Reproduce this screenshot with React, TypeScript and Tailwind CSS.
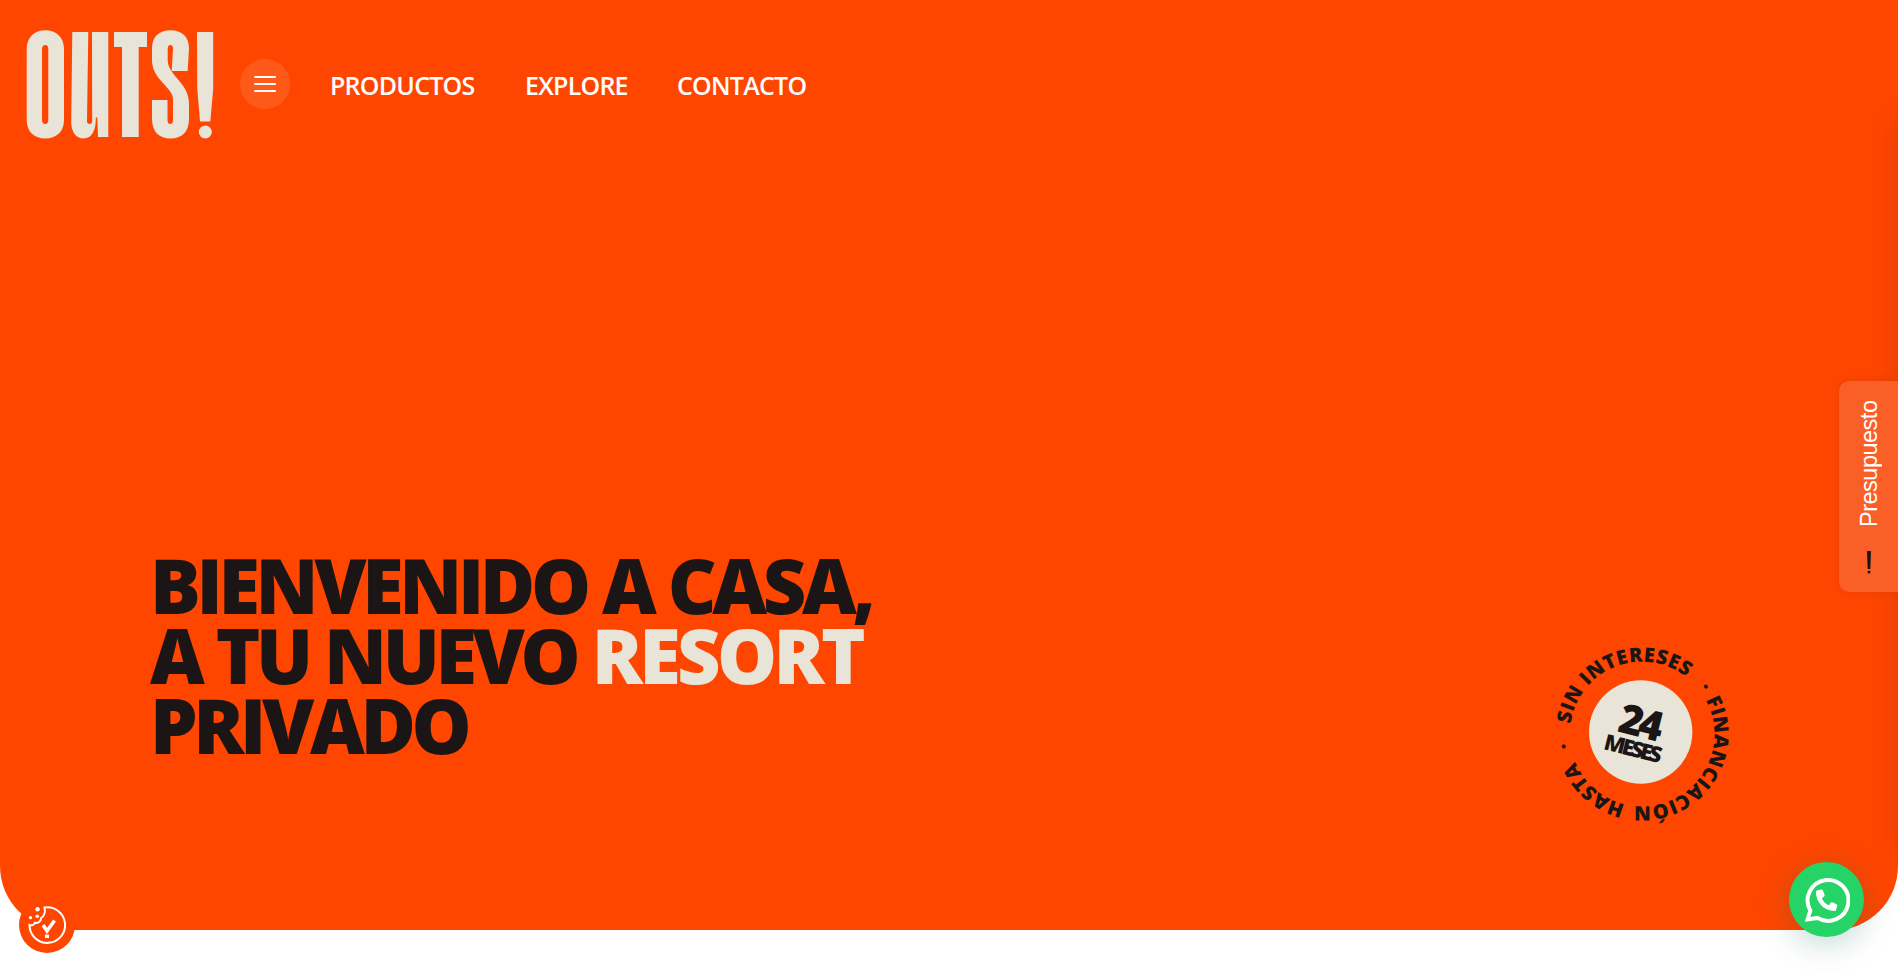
const dark = "#1b1516";

function Logo() {
  return (
    <svg className="h-[110px] w-[188px] shrink-0" viewBox="26 30 188 110" fill="#e8e4d8">
      <path fillRule="evenodd" d="M45.3 30.200C56 30.200 64 37 64 49V120C64 132 56 138.500 45.300 138.500S26.700 132 26.700 120V49C26.700 37 34.500 30.200 45.300 30.200ZM45.300 45C43.300 45 42 46.500 42 49V120C42 122.500 43.300 124 45.300 124S48.300 122.500 48.300 120V49C48.300 46.500 47.300 45 45.300 45Z" />
      <path d="M72.300 32H88.300L87 121C87 123 88 124 89.700 124S92.200 123 92.200 121L92 32H108.300V137H98L97.300 118Q96.500 116.500 95.800 118C96 130 92 138.500 83.500 138.500C76 138.500 71.200 132 71.200 122Z" />
      <path d="M114 32H147V47H138.700V137H122V47H114Z" />
      <path d="M170.500 30.200C182 30.200 189 37 189 48L187.700 71H171.700L173 49C173 46.500 172.300 45 170.500 45S167.700 46.500 167.700 49V60C167.700 76 189 82 189 104V119C189 132 181.500 138.500 170.500 138.500S152 132 152 119V100H167.500V120C167.500 122.500 168.500 124 170.300 124S173 122.500 173 120V99C173 87 152 80 152 60V48C152 37 159 30.200 170.500 30.200Z" />
      <path d="M197 32H213.200V89L210.300 121.500H200L197.300 89Z" />
      <circle cx="205.300" cy="132" r="6.500" />
    </svg>
  );
}

function Seal() {
  return (
    <svg
      className="absolute left-[1540px] top-[632px] h-[200px] w-[200px]"
      viewBox="-100 -100 200 200"
      fill={dark}
      fontFamily="'Open Sans', sans-serif"
    >
      <defs>
        <path id="ring" d="M0 72.300A72.300 72.300 0 0 1 0 -72.300A72.300 72.300 0 0 1 0 72.300A72.300 72.300 0 0 1 0 -72.300" />
      </defs>
      <g transform="translate(2 2)" fontSize="20" fontWeight="800">
        <text textLength="151"><textPath href="#ring" startOffset="123.500">SIN INTERESES</textPath></text>
        <text><textPath href="#ring" startOffset="291">·</textPath></text>
        <text textLength="157"><textPath href="#ring" startOffset="304.500">FINANCIACIÓN</textPath></text>
        <text textLength="68"><textPath href="#ring" startOffset="17">HASTA</textPath></text>
        <text><textPath href="#ring" startOffset="99">·</textPath></text>
      </g>
      <circle cx="0.700" r="51.700" fill="#e8e4d8" />
      <g transform="rotate(14)" fontWeight="800" textAnchor="middle">
        <text x="-3" y="5" fontSize="41" letterSpacing="-4">24</text>
        <text x="-4" y="25.500" fontSize="22" letterSpacing="-3">MESES</text>
      </g>
    </svg>
  );
}

export default function App() {
  return (
    <div className="relative h-[972px] w-full overflow-hidden bg-white font-['Open_Sans',sans-serif]">
      <section className="flex h-[930px] flex-col justify-between overflow-hidden rounded-b-[64px] bg-[#ff4600]">
        <header className="flex items-start pl-[26px] pt-[30px]">
          <Logo />
          <button className="ml-[26px] mt-[29px] flex size-[50px] flex-col items-center justify-center gap-[5px] rounded-full bg-white/10">
            <span className="h-[2px] w-[22px] rounded bg-white" />
            <span className="h-[2px] w-[22px] rounded bg-white" />
            <span className="h-[2px] w-[22px] rounded bg-white" />
          </button>
          <nav className="ml-[40px] mt-[35px] flex gap-[50px] text-[25px] leading-[40px] font-semibold tracking-[-0.75px] text-white">
            <a className="w-[145px]">PRODUCTOS</a>
            <a className="w-[102px]">EXPLORE</a>
            <a>CONTACTO</a>
          </nav>
        </header>
        <h1 className="pb-[170px] pl-[150px] text-[75.500px] leading-[70px] font-[770] tracking-[-4.35px] text-[#1b1516]">
          BIENVENIDO A CASA,<br />
          A TU NUEVO <span className="font-extrabold tracking-[-3.600px] text-[#e8e4d8]">RESORT</span><br />
          PRIVADO
        </h1>
      </section>

      <Seal />

      <div className="absolute left-[1898px] top-[120px] h-[732px] w-[40px] shadow-[0_0_30px_rgba(0,0,0,0.12)]" />

      <button className="absolute left-[1839px] top-[381px] flex h-[211px] w-[59px] flex-col items-center rounded-l-[10px] bg-[#f95f26] shadow-[0_0_10px_rgba(0,0,0,0.1)]">
        <span className="ml-px mt-[19px] h-[127px] rotate-180 font-['Liberation_Sans',sans-serif] text-[23.500px] leading-[30px] tracking-[-0.5px] text-white [writing-mode:vertical-rl]">
          Presupuesto
        </span>
        <svg className="mt-[24px] h-[23px] w-[6px]" viewBox="0 0 6 23" fill={dark}>
          <path d="M1 0H5L4.300 18H1.700Z" />
          <circle cx="3" cy="21" r="1.500" />
        </svg>
      </button>

      <button className="absolute left-[1789px] top-[862px] flex size-[75px] items-center justify-center rounded-full bg-[#25d366] shadow-[0_6px_32px_rgba(7,94,84,0.25)]">
        <svg className="size-[46px]" viewBox="0 0 46 46" fill="none">
          <path d="M3.600 42.400L6.300 33.500A20.400 20.400 0 1 1 13.500 40.900Z" stroke="#fff" strokeWidth="4" />
          <path fill="#fff" d="M13 13.400L17.500 12.600Q18.500 12.500 18.900 13.500L20.600 17.800Q20.900 18.600 20.200 19.300L17.800 21.500C19.300 24.500 21.600 26.700 24.700 28.200L26.900 25.600Q27.500 24.900 28.400 25.300L32.600 27.200Q33.500 27.700 33.200 28.700L32 33Q31.700 33.900 30.700 33.900C20 33.700 12 25.500 11.900 14.900Q11.900 13.600 13 13.400Z" />
        </svg>
      </button>

      <button className="absolute left-[19px] top-[897px] flex size-[56px] items-center justify-center rounded-full bg-[#ff4600]">
        <svg className="size-[40px]" viewBox="0 0 40 40" fill="none" stroke="#fff" strokeWidth="2">
          <path d="M17.500 2.500A17.800 17.800 0 1 1 2.500 20C4.500 20.700 7 20 7.800 17.800C11 18.500 14 16.500 14 13C17.500 11 18.500 6.500 17.500 2.500Z" />
          <path d="M16 20L20 26L27.500 15.500" strokeWidth="3.500" />
          <g fill="#fff" stroke="none">
            <circle cx="10.500" cy="4.200" r="2.200" />
            <circle cx="10.300" cy="11.300" r="1.800" />
            <circle cx="3.500" cy="12.700" r="1.600" />
            <path d="M18 29.500H22V33H18Z" />
          </g>
        </svg>
      </button>
    </div>
  );
}
